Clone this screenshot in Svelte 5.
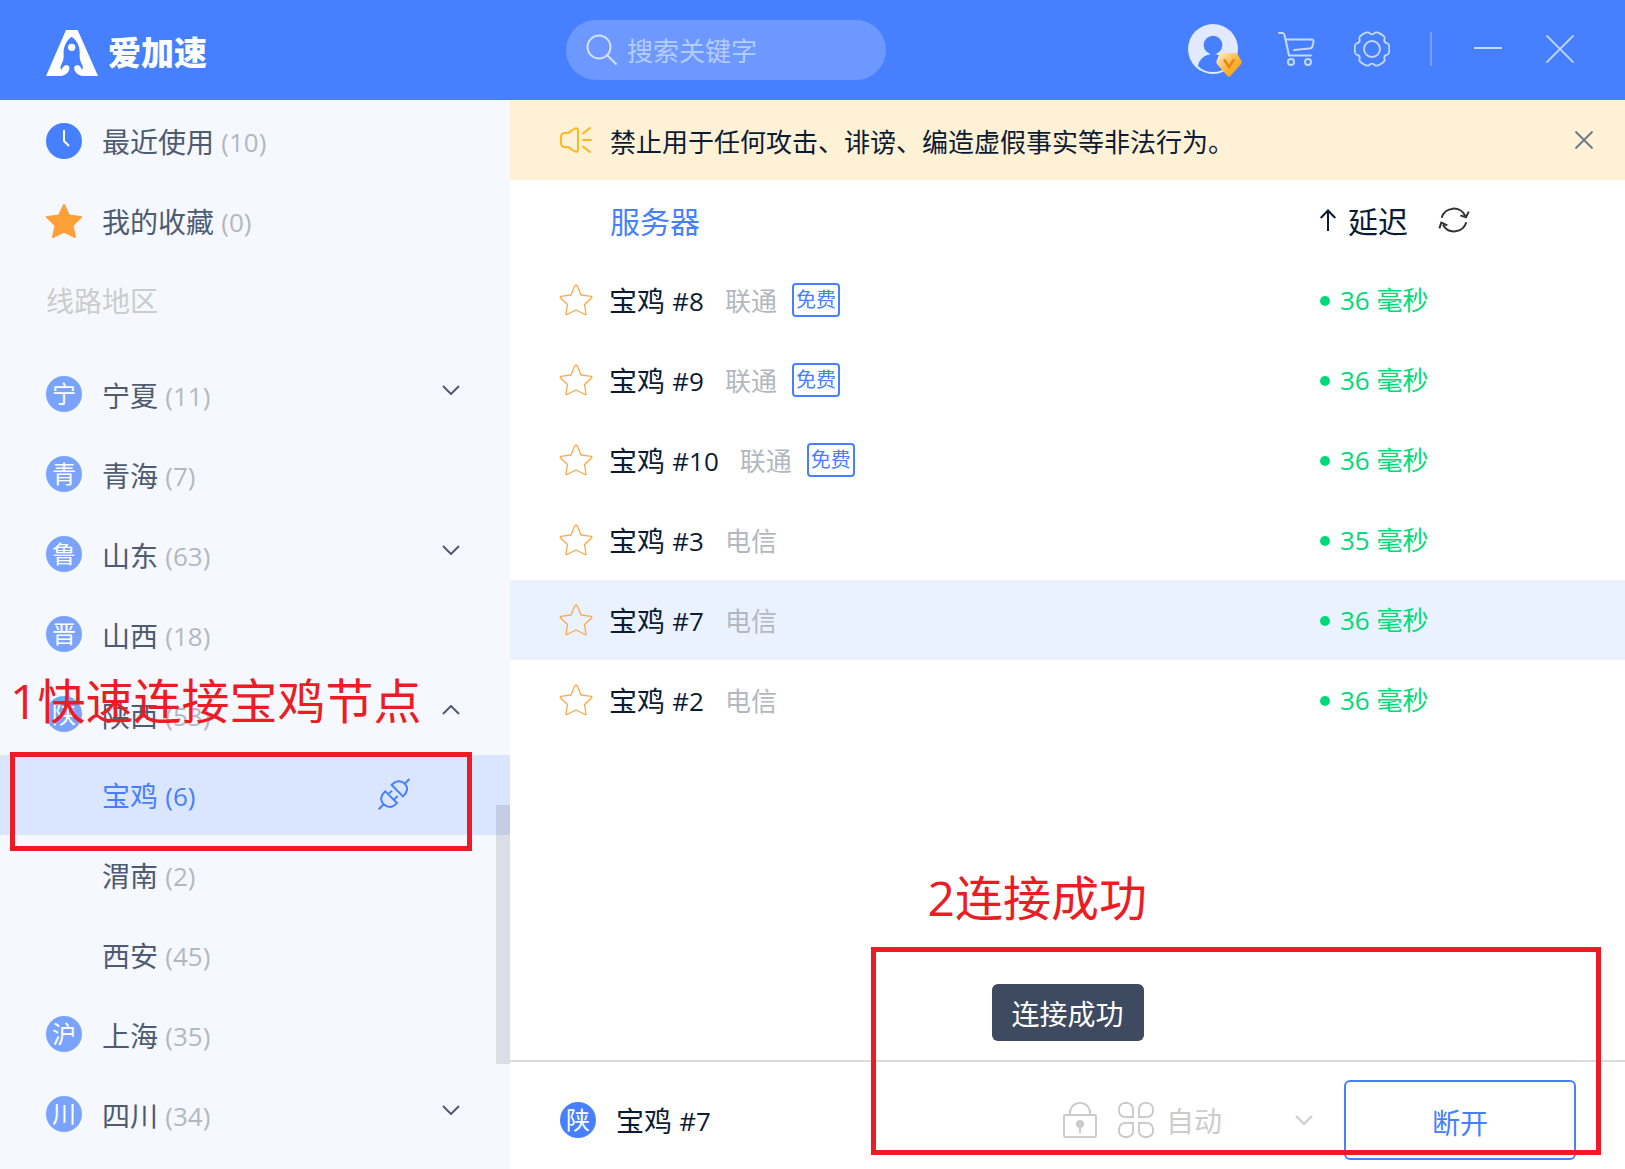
<script>
  const regions = [
    { mark: '宁', name: '宁夏', count: 11, arrow: 'down' },
    { mark: '青', name: '青海', count: 7 },
    { mark: '鲁', name: '山东', count: 63, arrow: 'down' },
    { mark: '晋', name: '山西', count: 18 },
    {
      mark: '陕', name: '陕西', count: 53, arrow: 'up',
      cities: [
        { name: '宝鸡', count: 6, active: true },
        { name: '渭南', count: 2 },
        { name: '西安', count: 45 }
      ]
    },
    { mark: '沪', name: '上海', count: 35 },
    { mark: '川', name: '四川', count: 34, arrow: 'down' }
  ];

  const servers = [
    { no: 8, carrier: '联通', free: true, ms: 36 },
    { no: 9, carrier: '联通', free: true, ms: 36 },
    { no: 10, carrier: '联通', free: true, ms: 36 },
    { no: 3, carrier: '电信', free: false, ms: 35 },
    { no: 7, carrier: '电信', free: false, ms: 36, active: true },
    { no: 2, carrier: '电信', free: false, ms: 36 }
  ];

  // Six-lobed gear outline around (18, 18).
  function gearPath() {
    const p = (deg, r) => {
      const a = (deg * Math.PI) / 180;
      return `${(18 + r * Math.cos(a)).toFixed(2)} ${(18 + r * Math.sin(a)).toFixed(2)}`;
    };
    let d = `M${p(-12, 17.4)}`;
    for (let t = 0; t < 360; t += 60) {
      d += `Q${p(t, 17.6)} ${p(t + 12, 17.4)}Q${p(t + 19, 17.4)} ${p(t + 22, 15.8)}`;
      d += `Q${p(t + 30, 13.6)} ${p(t + 38, 15.8)}Q${p(t + 41, 17.4)} ${p(t + 48, 17.4)}`;
    }
    return d + 'Z';
  }
  const gear = gearPath();
</script>

<div class="app">
  <header class="topbar">
    <div class="brand">
      <svg width="52" height="46" viewBox="0 0 156 138" aria-hidden="true">
        <path fill="#fff" d="M60 0H95L156 138H112C95 137 83 125 85 112C87 104 98 105 103 110C107 115 108 119 108 119C112 117 111 111 109 106C106 98 101 92 101 78C103 52 96 34 77 20C58 34 51 52 53 78C53 92 48 98 45 106C43 111 42 117 46 119C46 119 48 115 52 110C57 105 68 104 70 112C72 125 60 137 43 138H0Z" />
        <circle cx="77" cy="52" r="11" fill="#fff" />
      </svg>
      <span>爱加速</span>
    </div>
    <label class="search">
      <svg width="32" height="32" viewBox="0 0 32 32" fill="none" stroke="#d3e0ff" stroke-width="2" aria-hidden="true">
        <circle cx="13" cy="13" r="11.5" /><path d="M21 21L30.500 30.500" />
      </svg>
      <input type="text" placeholder="搜索关键字" aria-label="搜索关键字" />
    </label>
    <nav class="tools">
      <button class="avatar" aria-label="账户">
        <svg width="56" height="50" viewBox="0 0 56 50" aria-hidden="true">
          <defs>
            <linearGradient id="gem" x1="0" y1="0" x2="1" y2="1">
              <stop offset="0.1" stop-color="#ffe6bd" /><stop offset="0.55" stop-color="#ffb42e" /><stop offset="1" stop-color="#f59a14" />
            </linearGradient>
          </defs>
          <circle cx="25" cy="25" r="25" fill="#e1eaff" />
          <circle cx="25" cy="21" r="9.300" fill="#4680ff" />
          <path fill="#4680ff" d="M10 42C11 35 17 30 25 30S39 35 40 42C36 46 31 48 25 48S14 46 10 42Z" />
          <path fill="url(#gem)" d="M34 29H47Q49 29 50 31L53.500 37Q54 39 53 40L42.500 52Q41 53.500 39.500 52L29 40Q28 39 28.500 37L31 31Q32 29 34 29Z" />
          <path d="M36 35.500L41 43L46 35.500" fill="none" stroke="#e8851a" stroke-width="2.500" />
        </svg>
      </button>
      <button class="cart" aria-label="购物车">
        <svg width="37" height="35" viewBox="0 0 37 35" fill="none" stroke="#c7d8ff" stroke-width="2" stroke-linecap="round" stroke-linejoin="round" aria-hidden="true">
          <path d="M1 1H4.500Q6 1 6.500 3L11 23.500H33M8 7.500H33Q36 7.500 35.500 10L34.500 14Q34 16.500 31.500 16.500L16 18" />
          <circle cx="13" cy="30" r="3" /><circle cx="30" cy="30" r="3" />
        </svg>
      </button>
      <button class="gear" aria-label="设置">
        <svg width="36" height="36" viewBox="0 0 36 36" fill="none" stroke="#c7d8ff" stroke-width="1.800" aria-hidden="true">
          <path d={gear} /><circle cx="18" cy="18" r="8" />
        </svg>
      </button>
      <span class="divider"></span>
      <button class="minimize" aria-label="最小化">
        <svg width="28" height="28" viewBox="0 0 28 28" aria-hidden="true"><path d="M0 13H28" stroke="#c7d8ff" stroke-width="2" /></svg>
      </button>
      <button aria-label="关闭">
        <svg width="28" height="28" viewBox="0 0 28 28" aria-hidden="true"><path d="M.5.5L27.500 27.500M27.500.5L.5 27.500" stroke="#c7d8ff" stroke-width="1.800" /></svg>
      </button>
    </nav>
  </header>

  <div class="body">
    <aside class="sidebar">
      <button class="row">
        <svg class="icon" width="36" height="36" viewBox="0 0 36 36" aria-hidden="true">
          <circle cx="18" cy="18" r="18" fill="#4680ff" /><path d="M18 7V18L23 23" fill="none" stroke="#fff" stroke-width="2" />
        </svg>
        <span class="label">最近使用 <span class="count">(10)</span></span>
      </button>
      <button class="row">
        <svg class="icon" width="36" height="36" viewBox="0 0 36 36" aria-hidden="true">
          <path fill="#ff9f38" stroke="#ff9f38" stroke-width="2" stroke-linejoin="round" d="M18 2L23 12.500L35 14L26.500 22.500L29 34L18 28.500L7 34L9.500 22.500L1 14L13 12.500Z" />
        </svg>
        <span class="label">我的收藏 <span class="count">(0)</span></span>
      </button>
      <h2 class="section">线路地区</h2>

      {#each regions as region}
        <button class="row">
          <span class="icon mark">{region.mark}</span>
          <span class="label">{region.name} <span class="count">({region.count})</span></span>
          {#if region.arrow}
            <svg class="chevron" width="18" height="10" viewBox="0 0 18 10" fill="none" stroke="#4e5b70" stroke-width="2" aria-hidden="true">
              <path d={region.arrow === 'down' ? 'M1 1L9 9L17 1' : 'M1 9L9 1L17 9'} />
            </svg>
          {/if}
        </button>
        {#each region.cities ?? [] as city}
          <button class="row city" class:active={city.active}>
            <span class="label">{city.name} <span class="count">({city.count})</span></span>
            {#if city.active}
              <svg class="plug" width="32" height="32" viewBox="0 0 96 96" fill="none" stroke="#4680ff" stroke-width="6" aria-hidden="true">
                <path d="M2 94L18 78M80 18L94 3M41 21L75 55C88 44 92 28 80 17C69 6 52 8 41 21ZM22 40L57 75C45 90 29 90 17 79C5 67 8 52 22 40ZM30 50L42 38M46 67L59 54" />
              </svg>
            {/if}
          </button>
        {/each}
      {/each}
      <span class="thumb"></span>
      <div class="note-box first"></div>
      <p class="note first">1快速连接宝鸡节点</p>
    </aside>

    <main class="content">
      <div class="notice">
        <svg width="32" height="26" viewBox="0 0 32 26" fill="none" stroke="#ffb81f" stroke-width="2" stroke-linejoin="round" stroke-linecap="round" aria-hidden="true">
          <path d="M1 10Q1 6 5 6H7Q9 6 11 4L15 1.500Q18 .5 18 4V22Q18 25.500 15 24.500L11 22Q9 20 7 20H5Q1 20 1 16ZM23 6.500L30 1M23 13H31M23 19.500L30 25" />
        </svg>
        <p>禁止用于任何攻击、诽谤、编造虚假事实等非法行为。</p>
        <button aria-label="关闭公告">
          <svg width="18" height="18" viewBox="0 0 18 18" aria-hidden="true"><path d="M.5.5L17.500 17.500M17.500.5L.5 17.500" stroke="#707a88" stroke-width="2" /></svg>
        </button>
      </div>

      <table>
        <thead>
          <tr>
            <th class="server">服务器</th>
            <th class="delay">
              <div class="cell">
                <button class="sort">
                  <svg width="16" height="22" viewBox="0 0 16 22" fill="none" stroke="#0b1b33" stroke-width="2" aria-hidden="true"><path d="M8 22V1.500M.7 9L8 1.500L15.300 9" /></svg>
                  <span>延迟</span>
                </button>
                <button aria-label="刷新">
                  <svg width="32" height="28" viewBox="0 0 96 84" fill="none" stroke="#333" stroke-width="6" aria-hidden="true">
                    <path d="M11 35A38 38 0 0 1 82 30M85 49A38 38 0 0 1 15 56M67 28L84 34L92 17M4 67L10 50L28 58" />
                  </svg>
                </button>
              </div>
            </th>
          </tr>
        </thead>
        <tbody>
          {#each servers as server}
            <tr class:active={server.active}>
              <td class="server">
                <div class="cell">
                  <button class="star" aria-label="收藏">
                    <svg width="34" height="32" viewBox="0 0 34 32" fill="none" stroke="#ffa64a" stroke-width="1.300" stroke-linejoin="round" aria-hidden="true">
                      <path d="M17 1Q18 1 18.500 2.500L22 11L32 12.300Q33.500 13 32.500 14L25.500 20.500L27 30Q27 31 26 30.500L17 26L8 30.500Q7 31 7 30L8.500 20.500L1.500 14Q.5 13 2 12.300L12 11L15.500 2.500Q16 1 17 1Z" />
                    </svg>
                  </button>
                  <span class="name">宝鸡 <span class="latin">#{server.no}</span></span>
                  <span class="carrier">{server.carrier}</span>
                  {#if server.free}<span class="tag">免费</span>{/if}
                </div>
              </td>
              <td class="delay">
                <div class="cell"><span class="dot"></span><span class="ms">{server.ms} 毫秒</span></div>
              </td>
            </tr>
          {/each}
        </tbody>
      </table>

      <footer class="status">
        <span class="icon mark current">陕</span>
        <span class="name">宝鸡 <span class="latin">#7</span></span>
        <svg class="lock" width="34" height="36" viewBox="0 0 34 36" fill="none" stroke="#ccc" stroke-width="2" aria-hidden="true">
          <rect x="1" y="13" width="32" height="22" rx="1.500" /><path d="M7 13V11C7 5 11 1 17 1S27 5 27 11V13" />
          <circle cx="17" cy="22" r="4" fill="#ccc" stroke="none" /><path d="M17 22V31" />
        </svg>
        <svg width="36" height="36" viewBox="0 0 36 36" fill="none" stroke="#ccc" stroke-width="2" aria-hidden="true">
          <path d="M15 15H7A6 6 0 0 1 1 9V7A6 6 0 0 1 7 1H9A6 6 0 0 1 15 7ZM21 15H29A6 6 0 0 0 35 9V7A6 6 0 0 0 29 1H27A6 6 0 0 0 21 7ZM15 21H7A6 6 0 0 0 1 27V29A6 6 0 0 0 7 35H9A6 6 0 0 0 15 29ZM21 21H29A6 6 0 0 1 35 27V29A6 6 0 0 1 29 35H27A6 6 0 0 1 21 29Z" />
        </svg>
        <div class="mode">
          <select aria-label="模式"><option>自动</option></select>
          <svg width="18" height="10" viewBox="0 0 18 10" fill="none" stroke="#ccc" stroke-width="2" aria-hidden="true"><path d="M1 1L9 9L17 1" /></svg>
        </div>
        <button class="disconnect">断开</button>
      </footer>

      <div class="toast" role="status">连接成功</div>
      <p class="note second">2连接成功</p>
      <div class="note-box second"></div>
    </main>
  </div>
</div>

<style>
  :global(body) { margin: 0; }
  .app {
    display: flex;
    flex-direction: column;
    min-height: 100vh;
    font-family: 'Open Sans', 'Noto Sans CJK SC', sans-serif;
    font-size: 28px;
    line-height: 40px;
    color: #0b1b33;
    background: #fff;
  }
  .app *, .app { box-sizing: border-box; }
  button, input, select {
    font: inherit;
    color: inherit;
    border: 0;
    padding: 0;
    margin: 0;
    background: none;
  }
  button { cursor: pointer; }
  svg { display: block; flex: none; }
  p, h2 { margin: 0; font-weight: 400; }

  .topbar { display: flex; align-items: center; height: 100px; background: #4680ff; }
  .brand {
    display: flex;
    align-items: center;
    gap: 10px;
    flex: none;
    width: 510px;
    padding: 6px 0 0 46px;
    color: #fff;
    font-size: 33px;
    font-weight: 900;
  }
  .search {
    display: flex;
    align-items: center;
    gap: 9px;
    width: 320px;
    height: 60px;
    margin-left: 56px;
    padding: 0 20px;
    border-radius: 30px;
    background: #6c98ff;
  }
  .search input { flex: 1; min-width: 0; height: 42px; padding-top: 2px; font-size: 26px; color: #fff; outline: none; }
  .search input::placeholder { color: #b5ccff; opacity: 1; }
  .tools { display: flex; align-items: center; margin-left: auto; padding: 0 51px 2px 0; }
  .tools button { flex: none; }
  .avatar { margin-right: 34px; }
  .avatar svg { overflow: visible; }
  .cart { margin-right: 39px; }
  .gear { margin-right: 40px; }
  .divider { width: 2px; height: 34px; margin-right: 42px; background: #75a0ff; }
  .minimize { margin-right: 44px; }

  .body { display: flex; flex: 1; }
  .sidebar { position: relative; flex: none; width: 510px; padding-top: 1px; background: #f5f8ff; }
  .row {
    display: flex;
    align-items: center;
    gap: 20px;
    width: 100%;
    height: 80px;
    padding: 0 50px 0 46px;
    color: #4e5b70;
    text-align: left;
  }
  .icon { flex: none; width: 36px; height: 36px; }
  .mark {
    margin-bottom: 2px;
    border-radius: 50%;
    background: #7aa3ff;
    color: #fff;
    font-size: 24px;
    line-height: 36px;
    text-align: center;
  }
  .label { flex: 1; }
  .label, .name { padding-top: 2px; }
  .count, .latin { font-size: 26px; vertical-align: 1px; }
  .count { color: #b3b8bf; }
  .section { height: 94px; padding: 20px 0 0 46px; font-size: 28px; color: #ccc; }
  .chevron { margin-bottom: 10px; }
  .city { padding: 0 100px 0 102px; }
  .city.active { background: #dae6ff; color: #4680ff; }
  .city.active .count { color: inherit; }
  .plug { margin-bottom: 2px; }
  .thumb { position: absolute; right: 0; top: 705px; width: 14px; height: 259px; background: rgba(0, 0, 0, 0.1); }

  .content { position: relative; display: flex; flex-direction: column; flex: 1; min-width: 0; }
  .notice {
    display: flex;
    align-items: center;
    gap: 18px;
    height: 80px;
    padding: 0 32px 0 50px;
    background: #fef1d5;
    font-size: 26px;
  }
  .notice p { flex: 1; padding-top: 3px; }

  table { width: 100%; border-collapse: collapse; table-layout: fixed; }
  tr { height: 80px; }
  tr.active { background: #ebf2ff; }
  th, td { padding: 0; font-weight: 400; text-align: left; }
  th { font-size: 30px; }
  th.server { padding: 3px 0 0 100px; color: #4680ff; }
  th.delay, td.delay { width: 305px; }
  .cell { display: flex; align-items: center; }
  .sort { display: flex; align-items: center; gap: 12px; margin-right: 30px; }
  .sort span { padding-top: 3px; }
  .star { margin: 0 16px 0 49px; }
  .carrier { margin-left: 21px; padding-top: 2px; font-size: 26px; color: #b3b8bf; }
  .tag {
    margin-left: 15px;
    width: 48px;
    height: 34px;
    border: 2px solid #4680ff;
    border-radius: 4px;
    color: #4680ff;
    font-size: 20px;
    line-height: 30px;
    text-align: center;
  }
  td.delay { color: #00db77; font-size: 26px; }
  .dot { width: 10px; height: 10px; margin: 2px 10px 0 0; border-radius: 50%; background: #00db77; }

  .status {
    display: flex;
    align-items: center;
    height: 109px;
    margin-top: auto;
    padding: 8px 49px 0 50px;
    border-top: 2px solid #dcdcdc;
  }
  .mark.current { margin: 0 20px 0 0; background: #4680ff; }
  .lock { margin: 0 21px 0 auto; }
  .mode { display: flex; align-items: center; width: 147px; margin: 0 31px 0 12px; color: #ccc; }
  .mode select { flex: 1; min-width: 0; height: 42px; padding-top: 2px; appearance: none; outline: none; }
  .disconnect {
    width: 232px;
    height: 80px;
    padding-top: 6px;
    border: 2px solid #4680ff;
    border-radius: 6px;
    color: #4680ff;
  }

  .toast {
    position: absolute;
    left: 50%;
    bottom: 128px;
    transform: translateX(-50%);
    padding: 10px 20px 7px;
    border-radius: 6px;
    background: #3d4a5f;
    color: #fff;
    white-space: nowrap;
  }
  .note { position: absolute; font-size: 48px; line-height: 60px; color: #ed1c24; white-space: nowrap; }
  .note.first { left: 10px; top: 571px; }
  .note.second { right: 478px; bottom: 241px; }
  .note-box { position: absolute; border: 5px solid #ed1c24; pointer-events: none; }
  .note-box.first { left: 10px; top: 652px; width: 462px; height: 99px; }
  .note-box.second { right: 24px; bottom: 14px; width: 730px; height: 208px; }
</style>
